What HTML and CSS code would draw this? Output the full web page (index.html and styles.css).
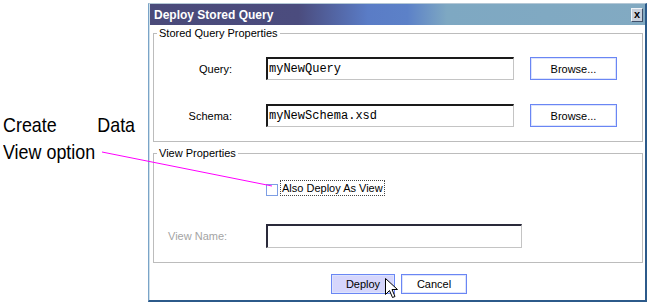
FILE: index.html
```html
<!DOCTYPE html>
<html lang="en">
<head>
  <meta charset="UTF-8">
  <title>Deploy Stored Query</title>
  <link rel="stylesheet" href="styles.css">
</head>
<body>

<div class="page">
  <div class="callout">
    <p class="callout-text">Create Data View option</p>
  </div>

  <div class="dialog">
    <div class="titlebar">
      <span class="title">Deploy Stored Query</span>
      <span class="close-btn">x</span>
    </div>

    <div class="dialog-body">
      <fieldset class="group">
        <legend>Stored Query Properties</legend>
        <div class="form-grid">
          <label class="field-label">Query:</label>
          <div class="text-field mono">myNewQuery</div>
          <button class="btn btn-browse">Browse...</button>

          <label class="field-label">Schema:</label>
          <div class="text-field mono">myNewSchema.xsd</div>
          <button class="btn btn-browse">Browse...</button>
        </div>
      </fieldset>

      <fieldset class="group group-view">
        <legend>View Properties</legend>
        <div class="check-row">
          <span class="checkbox"></span>
          <span class="check-label">Also Deploy As View</span>
        </div>
        <div class="name-row">
          <label class="field-label disabled">View Name:</label>
          <div class="text-field wide"></div>
        </div>
      </fieldset>

      <div class="actions">
        <button class="btn btn-default">Deploy</button>
        <button class="btn btn-cancel">Cancel</button>
      </div>
    </div>
  </div>

  <!-- pointer line + mouse cursor drawn over the dialog -->
  <svg class="overlay" width="651" height="305" viewBox="0 0 651 305">
    <line x1="102" y1="152" x2="272" y2="186" stroke="#ff00ff" stroke-width="1"/>
    <path d="M385.5 278.5 L385.5 294.5 L389.5 290.5 L392.5 297.5 L395 296.5 L392 289.5 L397.5 289.5 Z" fill="#ffffff" stroke="#000000" stroke-width="1" stroke-linejoin="miter"/>
  </svg>
</div>

</body>
</html>
```

FILE: styles.css
```css
:root {
  --frame-dark: #2c5a8a;
  --frame-light: #7aa4c8;
  --group-line: #bcbcbc;
  --btn-blue: #6a86f4;
  --lavender: #d6d6fc;
  --text: #000000;
  --muted: #a4a4a4;
}
body {
  margin: 0;
  background-color: #ffffff;
  font-family: 'Liberation Sans', Arial, sans-serif;
  font-size: 11px;
  color: var(--text);
}
.page {
  position: relative;
  width: 651px;
  height: 305px;
  display: flex;
}
.callout {
  width: 148px;
  padding-top: 111px;
}
.callout-text {
  margin: 0 0 0 3px;
  width: 155px;
  font-size: 21px;
  line-height: 27px;
  text-align: justify;
  text-align-last: left;
  transform: scaleX(0.852);
  transform-origin: left top;
}
.dialog {
  box-sizing: border-box;
  width: 499px;
  height: 299px;
  margin-top: 3px;
  background-color: #ffffff;
  border-top: 1px solid #b4c8d6;
  border-left: 1px solid var(--frame-light);
  border-right: 2px solid var(--frame-dark);
  border-bottom: 2px solid var(--frame-dark);
  box-shadow: inset 1px 0 0 #cfe0ea;
}
.titlebar {
  height: 21px;
  margin-left: 1px;
  display: flex;
  align-items: center;
  justify-content: space-between;
  padding: 0 2px 0 4px;
  background: linear-gradient(90deg, #4a4a7a 0%, #4b4c7e 30%, #5a7cc6 44%, #5c81c8 52%, #7ea8c2 60%, #82aac2 100%);
}
.title {
  color: #ffffff;
  font-weight: bold;
  font-size: 12px;
}
.close-btn {
  box-sizing: border-box;
  width: 12px;
  height: 14px;
  margin-top: 1px;
  background-color: #c8d0dc;
  border-top: 1px solid #f0f4f8;
  border-left: 1px solid #f0f4f8;
  border-right: 1px solid #40506a;
  border-bottom: 1px solid #40506a;
  font-weight: bold;
  font-size: 11px;
  line-height: 10px;
  text-align: center;
}
.dialog-body {
  padding: 2px 2px 0 4px;
}
.group {
  margin: 0;
  padding: 17px 0 14px 0;
  border: 1px solid var(--group-line);
  min-width: 0;
}
.group legend {
  margin-left: 3px;
  padding: 0 2px;
  line-height: 13px;
}
.group-view {
  margin-top: 5px;
  padding-top: 20px;
}
.form-grid {
  display: grid;
  grid-template-columns: 78px 248px 87px;
  grid-auto-rows: 23px;
  column-gap: 34px;
  row-gap: 24px;
  align-items: center;
}
.form-grid .btn-browse {
  margin-left: -18px;
}
.field-label {
  text-align: right;
}
.field-label.disabled {
  color: var(--muted);
  text-align: left;
  width: 98px;
}
.text-field {
  box-sizing: border-box;
  height: 23px;
  background-color: #ffffff;
  border-top: 2px solid #1a1a1a;
  border-left: 2px solid #1a1a1a;
  border-right: 1px solid #c4c4c4;
  border-bottom: 1px solid #c4c4c4;
  display: flex;
  align-items: center;
  padding-left: 1px;
}
.mono {
  font-family: 'Liberation Mono', 'Courier New', monospace;
  font-size: 12px;
}
.text-field.wide {
  width: 256px;
  height: 24px;
  border-top-color: #2a2a3a;
  border-left-color: #2a2a3a;
}
.btn {
  box-sizing: border-box;
  font-family: 'Liberation Sans', Arial, sans-serif;
  font-size: 11px;
  color: var(--text);
  background-color: #ffffff;
  border: 1px solid var(--btn-blue);
  box-shadow: inset 0 0 0 1px #dde4fc;
  padding: 0;
  border-radius: 0;
}
.btn-browse {
  height: 23px;
  width: 87px;
}
.check-row {
  display: flex;
  align-items: center;
  height: 16px;
  margin-left: 112px;
}
.checkbox {
  box-sizing: border-box;
  width: 12px;
  height: 12px;
  margin-top: 4px;
  border: 1px solid #7d9ee4;
  background-color: #ffffff;
}
.check-label {
  margin-left: 3px;
  padding: 0 1px 0 1px;
  line-height: 14px;
  outline: 1px dotted #444444;
}
.name-row {
  display: flex;
  align-items: center;
  margin-top: 28px;
  padding-left: 14px;
}
.actions {
  display: flex;
  justify-content: center;
  gap: 6px;
  margin-top: 11px;
  padding-left: 2px;
}
.btn-default {
  width: 64px;
  height: 20px;
  background-color: var(--lavender);
}
.btn-cancel {
  width: 66px;
  height: 20px;
}
.overlay {
  position: absolute;
  left: 0;
  top: 0;
  pointer-events: none;
}
```
